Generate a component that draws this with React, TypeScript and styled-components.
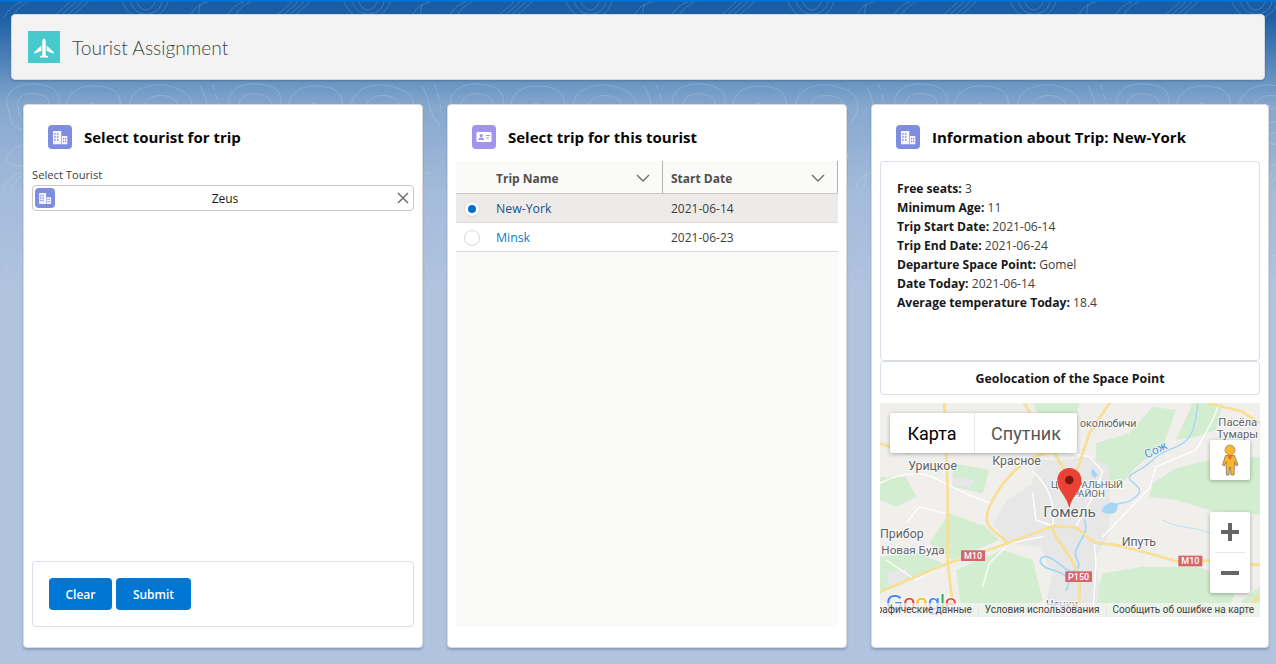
import React from "react";
import styled, { createGlobalStyle } from "styled-components";

const GlobalStyle = createGlobalStyle`
  html, body {
    margin: 0;
    padding: 0;
    height: 100%;
  }
  body {
    font-family: "Open Sans", "Noto Sans", sans-serif;
    font-size: 12px;
    color: #080707;
    overflow: hidden;
  }
`;

const Page = styled.div`
  position: relative;
  width: 1276px;
  height: 664px;
  overflow: hidden;
  background: linear-gradient(180deg, #1a5ca2 0px, #1c5fa4 14px, #6e97c5 84px, #86a8cf 105px, #a4bbda 190px, #b0c3df 290px);
  border-top: 2px solid #0070d2;
  box-sizing: border-box;
`;

const Contours = styled.svg`
  position: absolute;
  inset: 0;
  width: 1276px;
  height: 340px;
  pointer-events: none;
  mask-image: linear-gradient(#000 55%, transparent);
`;

const Content = styled.div`
  position: relative;
  display: flex;
  flex-direction: column;
  padding: 12px 7px 0 11px;
  gap: 24px;
`;

const AppHeader = styled.header`
  display: flex;
  align-items: center;
  gap: 12px;
  height: 66px;
  box-sizing: border-box;
  padding-left: 16px;
  margin-right: 4px;
  background: #f3f3f3;
  border: 1px solid #d4d8de;
  border-radius: 4px;
  box-shadow: 0 1px 2px rgba(40, 60, 90, 0.3);
`;

const AppIcon = styled.div`
  display: flex;
  align-items: center;
  justify-content: center;
  width: 32px;
  height: 32px;
  background: #48c9cb;
`;

const AppTitle = styled.h1`
  margin: 0;
  font-family: Lato, "Open Sans", sans-serif;
  font-size: 19.2px;
  font-weight: 300;
  color: #444;
`;

const Columns = styled.main`
  display: grid;
  grid-template-columns: 400px 400px 398px;
  gap: 24px;
  padding-left: 12px;
`;

const Card = styled.section`
  display: flex;
  flex-direction: column;
  height: 544px;
  box-sizing: border-box;
  padding: 0 8px;
  background: #fff;
  border: 1px solid #dddbda;
  border-radius: 4px;
  box-shadow: 0 2px 2px rgba(60, 80, 110, 0.3);
`;

const CardHeader = styled.div`
  display: flex;
  align-items: center;
  height: 56px;
  flex: none;
  box-sizing: border-box;
  padding: 8px 0 0 16px;
  gap: 12px;
`;

const CardTitle = styled.h2`
  margin: 0;
  font-size: 15px;
  font-weight: 700;
  color: #080707;
`;

const IconTile = styled.span<{ $size: number; $bg: string }>`
  display: inline-flex;
  align-items: center;
  justify-content: center;
  flex: none;
  width: ${(p) => p.$size}px;
  height: ${(p) => p.$size}px;
  border-radius: 4px;
  background: ${(p) => p.$bg};
`;

const FieldLabel = styled.label`
  display: block;
  font-size: 11.2px;
  line-height: 16px;
  margin: 6px 0 2px;
  color: #3e3e3c;
`;

const Lookup = styled.div`
  display: flex;
  align-items: center;
  height: 26px;
  box-sizing: border-box;
  padding: 0 2px;
  border: 1px solid #c9c9c9;
  border-radius: 4px;
`;

const LookupValue = styled.span`
  flex: 1;
  text-align: center;
  font-size: 12px;
  color: #181818;
`;

const ClearIcon = styled.svg`
  flex: none;
  width: 16px;
  height: 16px;
`;

const Spacer = styled.div`
  flex: 1;
`;

const ButtonBox = styled.div`
  display: flex;
  gap: 4px;
  height: 66px;
  box-sizing: border-box;
  padding: 16px;
  margin-bottom: 20px;
  border: 1px solid #d8dde6;
  border-radius: 4px;
`;

const Button = styled.button<{ $width: number }>`
  width: ${(p) => p.$width}px;
  height: 32px;
  padding: 0;
  border: 0;
  border-radius: 4px;
  background: #0176d3;
  color: #fff;
  font-family: inherit;
  font-size: 12px;
  font-weight: 600;
`;

const TableArea = styled.div`
  flex: 1;
  margin-bottom: 20px;
  background: #fafaf9;
  overflow: hidden;
`;

const TableRow = styled.div<{ $bg: string; $height: number; $line: string }>`
  display: grid;
  grid-template-columns: 40px 166px 1fr;
  align-items: center;
  height: ${(p) => p.$height}px;
  box-sizing: border-box;
  background: ${(p) => p.$bg};
  border-bottom: 1px solid ${(p) => p.$line};
`;

const HeaderCell = styled.div`
  display: flex;
  align-items: center;
  justify-content: space-between;
  height: 100%;
  box-sizing: border-box;
  padding: 2px 12px 0 0;
  font-size: 12px;
  font-weight: 700;
  color: #514f4d;
`;

const HeaderCellRight = styled(HeaderCell)`
  padding-left: 8px;
  border-left: 1px solid #b5b3b1;
  border-right: 1px solid #b5b3b1;
`;

const Chevron = styled.svg`
  width: 14px;
  height: 14px;
`;

const RadioCell = styled.div`
  display: flex;
  justify-content: center;
  padding: 2px 9px 0 0;
`;

const Radio = styled.span<{ $checked?: boolean }>`
  display: flex;
  align-items: center;
  justify-content: center;
  width: 16px;
  height: 16px;
  box-sizing: border-box;
  border-radius: 50%;
  background: #fff;
  border: 1px solid #dddbda;

  &::after {
    content: "";
    display: ${(p) => (p.$checked ? "block" : "none")};
    width: 8px;
    height: 8px;
    border-radius: 50%;
    background: #0070d2;
  }
`;

const TripLink = styled.a<{ $active?: boolean }>`
  font-size: 12.3px;
  color: ${(p) => (p.$active ? "#1b4f8a" : "#0b7ad1")};
`;

const DateCell = styled.span`
  padding-left: 9px;
  font-size: 12px;
  color: #3e3e3c;
`;

const InfoBox = styled.div`
  height: 200px;
  flex: none;
  box-sizing: border-box;
  padding: 17px 16px;
  border: 1px solid #d8dde6;
  border-radius: 4px;
`;

const InfoLine = styled.div`
  font-size: 12.1px;
  line-height: 19px;
  color: #3e3e3c;

  b {
    font-weight: 700;
    color: #181818;
  }
`;

const GeoTitle = styled.div`
  display: flex;
  align-items: center;
  justify-content: center;
  flex: none;
  height: 34px;
  box-sizing: border-box;
  border: 1px solid #d8dde6;
  border-radius: 4px;
  font-size: 12.4px;
  font-weight: 700;
  color: #181818;
`;

const MapFrame = styled.div`
  position: relative;
  flex: none;
  height: 214px;
  margin-top: 8px;
  overflow: hidden;
  background: #f0efeb;
`;

const MapDrawing = styled.svg`
  display: block;
  width: 380px;
  height: 214px;
`;

const MapTypes = styled.div`
  position: absolute;
  top: 10px;
  left: 10px;
  display: flex;
  height: 40px;
  background: #fff;
  border-radius: 2px;
  box-shadow: 0 1px 4px rgba(0, 0, 0, 0.3);
`;

const MapType = styled.div<{ $width: number; $active?: boolean }>`
  display: flex;
  align-items: center;
  justify-content: center;
  width: ${(p) => p.$width}px;
  box-sizing: border-box;
  font-family: Roboto, sans-serif;
  font-size: 18px;
  color: ${(p) => (p.$active ? "#000" : "#565656")};
  border-left: ${(p) => (p.$active ? "0" : "1px solid #e6e6e6")};
`;

const Pegman = styled.div`
  position: absolute;
  top: 37px;
  right: 10px;
  display: flex;
  align-items: center;
  justify-content: center;
  width: 40px;
  height: 40px;
  background: #fff;
  border-radius: 2px;
  box-shadow: 0 1px 4px rgba(0, 0, 0, 0.3);
`;

const ZoomControl = styled.div`
  position: absolute;
  top: 109px;
  right: 10px;
  width: 40px;
  height: 81px;
  background: #fff;
  border-radius: 2px;
  box-shadow: 0 1px 4px rgba(0, 0, 0, 0.3);
`;

const ZoomStep = styled.div`
  display: flex;
  align-items: center;
  justify-content: center;
  height: 40px;

  & + & {
    height: 40px;
    margin: 0 5px;
    border-top: 1px solid #e6e6e6;
  }
`;

const Attribution = styled.div`
  position: absolute;
  right: 0;
  bottom: 0;
  display: flex;
  justify-content: flex-end;
  width: 100%;
  height: 14px;
  overflow: hidden;
  background: rgba(245, 245, 245, 0.72);
`;

const AttributionItem = styled.span<{ $first?: boolean }>`
  flex: none;
  padding: 0 6px;
  font-family: Roboto, sans-serif;
  font-size: 10px;
  line-height: 14px;
  color: #444;
  white-space: nowrap;
  border-left: ${(p) => (p.$first ? "0" : "1px solid #e6e6e6")};
`;

const BuildingIcon = ({ size }: { size: number }) => (
  <svg width={size} height={size} viewBox="0 0 24 24">
    <path
      fill="#fff"
      fillOpacity="0.92"
      fillRule="evenodd"
      d="M5 6h8.300v13.300H5zM6.200 8.200v1.600h1.500V8.200zM8.900 8.200v1.600h1.500V8.200zM6.200 11.200v1.600h1.500v-1.600zM8.900 11.200v1.600h1.500v-1.600zM6.200 14.200v1.600h1.500v-1.600zM8.900 14.200v1.600h1.500v-1.600z"
    />
    <path
      fill="#fff"
      fillOpacity="0.92"
      fillRule="evenodd"
      d="M13.900 11H19.300v8.300H13.900zM15 13v1.500h1.200V13zM17 13v1.500h1.200V13zM15 15.700v1.500h1.200v-1.500zM17 15.700v1.500h1.200v-1.500z"
    />
  </svg>
);

const ContactIcon = () => (
  <svg width="24" height="24" viewBox="0 0 24 24">
    <path
      fill="#fff"
      fillRule="evenodd"
      d="M5.500 7h13a1 1 0 0 1 1 1v8a1 1 0 0 1-1 1h-13a1 1 0 0 1-1-1V8a1 1 0 0 1 1-1zM14 10v1h4v-1zM14 12.500v1h3v-1z"
    />
    <circle cx="9.200" cy="10.600" r="1.600" fill="#a094ed" />
    <path fill="#a094ed" d="M6.400 15c0-1.600 1.200-2.400 2.800-2.400s2.800.8 2.800 2.400z" />
  </svg>
);

const PlaneIcon = () => (
  <svg width="32" height="32" viewBox="0 0 32 32">
    <path fill="#fff" d="M16 7.500c1 0 1.700 1.500 1.700 3.200v13.600l2.300 1v1.200h-8v-1.200l2.300-1V10.700c0-1.700.7-3.200 1.700-3.200z" />
    <path fill="#fff" d="M13.400 14.500v5.500l-6.600 2.400c-.8.200-1.100-.5-.6-1.100zM18.600 14.500v5.500l6.600 2.400c.8.200 1.100-.5.6-1.100z" />
  </svg>
);

const DownChevron = () => (
  <Chevron viewBox="0 0 14 14">
    <path d="M1 4l6 6 6-6" fill="none" stroke="#706e6b" strokeWidth="1.400" />
  </Chevron>
);

const ContourLayer = () => (
  <Contours viewBox="0 0 1276 340">
    <defs>
      <pattern id="topo" width="222" height="170" patternUnits="userSpaceOnUse">
        <g fill="none" stroke="#fff" strokeOpacity="0.17">
          {/* top band: nested bends and parallel diagonals */}
          <path d="M4 16C8 8 14 2 22 0M12 16C15 9 20 4 28 0" />
          <path d="M52 16L70 0M58 16L76 0M64 16L82 0M70 16L88 0" />
          <path d="M122 0C128 12 134 16 146 16S164 10 168 0M130 0C134 8 138 12 146 12S160 8 162 0M137 0C139 5 142 8 146 8S153 5 155 0" />
          <path d="M190 16C192 8 198 2 208 0M198 16L200 2" />
          {/* lower band: closed contour rings */}
          <path d="M8 106C2 92 16 80 36 82S62 92 58 106 44 130 26 128 12 118 8 106z" />
          <path d="M18 106C15 97 24 90 36 92S50 98 48 106 38 118 28 117 20 113 18 106z" />
          <path d="M70 120C60 100 72 84 92 84S122 90 120 106 112 128 92 132 76 130 70 120z" />
          <circle cx="92" cy="104" r="3" />
          <path d="M130 100C132 88 150 80 168 84S196 96 190 112 170 134 150 130 128 116 130 100z" />
          <path d="M144 106C144 96 156 92 166 94S180 102 176 110 164 122 154 120 144 114 144 106z" />
          <path d="M154 108l5-5 3 5 5-4 3 7" />
          <path d="M200 84C208 96 206 112 218 124" />
          <path d="M212 82C218 94 218 108 222 114" strokeDasharray="6 4" />
          {/* deeper contours */}
          <path d="M10 150C24 136 60 138 76 150S60 168 36 166 0 162 10 150z" />
          <path d="M110 148C130 136 170 138 180 150S150 168 128 164 98 156 110 148z" />
        </g>
      </pattern>
    </defs>
    <rect width="1276" height="340" fill="url(#topo)" />
  </Contours>
);

const labelProps = {
  fontFamily: "Roboto, sans-serif",
  fill: "#5f6368",
  stroke: "#fff",
  strokeWidth: 6,
  strokeOpacity: 0.8,
  paintOrder: "stroke",
} as const;

const MapLabel = ({ x, y, size = 37, children }: { x: number; y: number; size?: number; children: string }) => (
  <text x={x} y={y} fontSize={size} {...labelProps}>
    {children}
  </text>
);

const Shield = ({ x, y, w, label }: { x: number; y: number; w: number; label: string }) => (
  <g>
    <rect x={x} y={y} width={w} height={32} fill="#d6646b" />
    <text x={x + w / 2} y={y + 25} textAnchor="middle" fontFamily="Roboto, sans-serif" fontWeight="500" fontSize="27" fill="#fff">
      {label}
    </text>
  </g>
);

const mainRoads = [
  "M12 575L215 490 390 432 530 378 600 382 655 428 720 435 800 455 905 485 1000 482 1152 495",
  "M445 10L530 150 565 210",
  "M700 10L640 100 600 220",
  "M205 10L215 280 215 490 235 651",
  "M530 155C440 170 385 230 345 310S370 390 395 432",
  "M530 378C530 420 590 460 605 520S605 610 600 651",
  "M12 130L100 160",
  "M1000 10L1100 35 1152 70",
  "M1090 651L1152 585",
];

const CityMap = () => (
  <MapDrawing viewBox="12 9 1140 642">
    <rect x="12" y="9" width="1140" height="642" fill="#f0efeb" />
    {/* forests */}
    <g fill="#d2edcf">
      <path d="M830 250L900 205 1000 180 1152 170V345L1000 330 900 300 820 290z" />
      <path d="M950 10H1040L1020 90 960 110 900 120z" />
      <path d="M680 520L800 500 960 500 1090 540 1050 651H640z" />
      <path d="M1100 600L1152 560V651H1080z" />
      <path d="M220 340L330 380 370 420 230 480 160 430z" />
      <path d="M12 470L130 460 200 490 60 560 12 580z" />
      <path d="M240 510L380 450 470 480 500 600 430 651H260z" />
      <path d="M12 230H90L120 290 60 320 12 300z" />
      <path d="M230 190L340 210 320 280 230 260z" />
      <path d="M660 130L760 100 830 20 900 30 860 140 780 200 720 270 660 230z" />
      <path d="M470 10H610L600 60 530 130z" />
    </g>
    {/* city */}
    <path
      fill="#e7e7e7"
      d="M395 300L470 250 480 180 560 180 640 170 700 200 700 290 700 400 660 470 670 600 620 651H500L530 520 490 440 400 430 350 370z"
    />
    <path fill="#e7e7e7" d="M230 230L300 240 280 265 235 255zM30 520L90 505 100 540 40 560z" />
    {/* water */}
    <g fill="none" stroke="#a6d6f6" strokeLinecap="round" strokeLinejoin="round">
      <path strokeWidth="4" d="M965 12C960 70 950 110 920 130S860 150 830 180 770 215 760 230 815 260 780 290 730 300 715 320" />
      <path strokeWidth="5" d="M625 360C640 400 610 420 600 450S625 490 600 510 540 470 510 470 490 500 530 510 590 540 570 570" />
      <path strokeWidth="2" d="M860 360C900 385 960 380 1000 400S1090 410 1120 400" />
    </g>
    <path fill="#a6d6f6" d="M680 325C690 305 725 300 725 320S705 345 690 340 675 335 680 325zM650 205L665 225 655 235 645 220z" />
    {/* minor roads */}
    <g fill="none" stroke="#fff" strokeWidth="4" strokeLinecap="round">
      <path d="M12 250C60 225 110 215 150 225S250 280 345 310" />
      <path d="M530 150L640 170 680 215 650 290 600 380" />
      <path d="M470 215C500 240 540 290 530 378" />
      <path d="M470 280L480 360 530 378" />
      <path d="M655 428L660 490 650 651" />
      <path d="M680 410L820 265 840 200 960 150 1010 60 1030 10" />
      <path d="M215 490L120 540 30 480" />
      <path d="M90 370L130 320 205 340" />
      <path d="M400 430L340 490 320 560" />
      <path d="M400 430L500 410" />
    </g>
    {/* main roads */}
    <g fill="none" strokeLinejoin="round" strokeLinecap="round">
      <g stroke="#f3d583" strokeWidth="7">
        {mainRoads.map((d) => (
          <path key={d} d={d} />
        ))}
      </g>
      <g stroke="#fde293" strokeWidth="4.500">
        {mainRoads.map((d) => (
          <path key={d} d={d} />
        ))}
      </g>
    </g>
    <Shield x={255} y={451} w={72} label="M10" />
    <Shield x={907} y={467} w={72} label="M10" />
    <Shield x={568} y={514} w={80} label="P150" />
    {/* place names */}
    <MapLabel x={612} y={80} size={32}>околюбичи</MapLabel>
    <MapLabel x={1027} y={77} size={34}>Пасёла</MapLabel>
    <MapLabel x={1022} y={113} size={34}>Тумары</MapLabel>
    <MapLabel x={97} y={210}>Урицкое</MapLabel>
    <MapLabel x={349} y={195}>Красное</MapLabel>
    <MapLabel x={525} y={264} size={29}>ЦЕНТРАЛЬНЫЙ</MapLabel>
    <MapLabel x={590} y={292} size={29}>РАЙОН</MapLabel>
    <MapLabel x={502} y={350} size={46}>Гомель</MapLabel>
    <MapLabel x={12} y={414}>Прибор</MapLabel>
    <MapLabel x={16} y={462} size={35}>Новая Буда</MapLabel>
    <MapLabel x={737} y={437}>Ипуть</MapLabel>
    <MapLabel x={510} y={625} size={33}>Ченки</MapLabel>
    <text
      x="812"
      y="176"
      fontSize="36"
      fontFamily="Roboto, sans-serif"
      fill="#4a90d9"
      stroke="#fff"
      strokeWidth="4"
      strokeOpacity="0.7"
      paintOrder="stroke"
      transform="rotate(-26 812 176)"
    >
      Сож
    </text>
    {/* google logo */}
    <text x="30" y="630" fontFamily="'Liberation Sans', sans-serif" fontSize="66" fontWeight="400" stroke="#fff" strokeWidth="4" paintOrder="stroke">
      <tspan fill="#4285f4">G</tspan>
      <tspan fill="#ea4335">o</tspan>
      <tspan fill="#fbbc05">o</tspan>
      <tspan fill="#4285f4">g</tspan>
      <tspan fill="#34a853">l</tspan>
      <tspan fill="#ea4335">e</tspan>
    </text>
    {/* pin */}
    <path fill="#ea4335" d="M580 325C572 285 544 275 544 240a36 36 0 0 1 72 0C616 275 588 285 580 325z" />
    <circle cx="580" cy="240" r="13" fill="#7f1610" />
  </MapDrawing>
);

const details: [string, string][] = [
  ["Free seats:", "3"],
  ["Minimum Age:", "11"],
  ["Trip Start Date:", "2021-06-14"],
  ["Trip End Date:", "2021-06-24"],
  ["Departure Space Point:", "Gomel"],
  ["Date Today:", "2021-06-14"],
  ["Average temperature Today:", "18.4"],
];

export default function App() {
  return (
    <Page>
      <GlobalStyle />
      <ContourLayer />
      <Content>
        <AppHeader>
          <AppIcon>
            <PlaneIcon />
          </AppIcon>
          <AppTitle>Tourist Assignment</AppTitle>
        </AppHeader>
        <Columns>
          <Card>
            <CardHeader>
              <IconTile $size={24} $bg="#7f8de1">
                <BuildingIcon size={24} />
              </IconTile>
              <CardTitle>Select tourist for trip</CardTitle>
            </CardHeader>
            <FieldLabel>Select Tourist</FieldLabel>
            <Lookup>
              <IconTile $size={20} $bg="#7f8de1">
                <BuildingIcon size={20} />
              </IconTile>
              <LookupValue>Zeus</LookupValue>
              <ClearIcon viewBox="0 0 16 16">
                <path d="M3 3l10 10M13 3L3 13" stroke="#706e6b" strokeWidth="1.500" fill="none" />
              </ClearIcon>
            </Lookup>
            <Spacer />
            <ButtonBox>
              <Button $width={63}>Clear</Button>
              <Button $width={75}>Submit</Button>
            </ButtonBox>
          </Card>

          <Card>
            <CardHeader>
              <IconTile $size={24} $bg="#a094ed">
                <ContactIcon />
              </IconTile>
              <CardTitle>Select trip for this tourist</CardTitle>
            </CardHeader>
            <TableArea>
              <TableRow $bg="#fafaf9" $height={33} $line="#c9c7c5">
                <span />
                <HeaderCell>
                  Trip Name
                  <DownChevron />
                </HeaderCell>
                <HeaderCellRight>
                  Start Date
                  <DownChevron />
                </HeaderCellRight>
              </TableRow>
              <TableRow $bg="#ecebea" $height={29} $line="#dddbda">
                <RadioCell>
                  <Radio $checked />
                </RadioCell>
                <TripLink $active>New-York</TripLink>
                <DateCell>2021-06-14</DateCell>
              </TableRow>
              <TableRow $bg="#fff" $height={29} $line="#dddbda">
                <RadioCell>
                  <Radio />
                </RadioCell>
                <TripLink>Minsk</TripLink>
                <DateCell>2021-06-23</DateCell>
              </TableRow>
            </TableArea>
          </Card>

          <Card>
            <CardHeader>
              <IconTile $size={24} $bg="#7f8de1">
                <BuildingIcon size={24} />
              </IconTile>
              <CardTitle>Information about Trip: New-York</CardTitle>
            </CardHeader>
            <InfoBox>
              {details.map(([label, value]) => (
                <InfoLine key={label}>
                  <b>{label}</b> {value}
                </InfoLine>
              ))}
            </InfoBox>
            <GeoTitle>Geolocation of the Space Point</GeoTitle>
            <MapFrame>
              <CityMap />
              <MapTypes>
                <MapType $width={84} $active>
                  Карта
                </MapType>
                <MapType $width={103}>Спутник</MapType>
              </MapTypes>
              <Pegman>
                <svg width="18" height="32" viewBox="0 0 18 32">
                  <circle cx="9" cy="6" r="5" fill="#fbb62e" stroke="#8f8471" strokeWidth="0.700" />
                  <path
                    fill="#fbb62e"
                    stroke="#7d7466"
                    strokeWidth="0.800"
                    d="M4.500 11.500h9l3.500 9.500-1.900.8-1.600-4.300-.5 13.500h-2.900L9.400 23h-.8l-.6 8H5.500L5 17.500l-1.600 4.300-1.900-.8z"
                  />
                  <path fill="#e8762b" d="M6 11.500l3 5 3-5z" />
                </svg>
              </Pegman>
              <ZoomControl>
                <ZoomStep>
                  <svg width="18" height="18" viewBox="0 0 18 18">
                    <path d="M7 0h4v7h7v4h-7v7H7v-7H0V7h7z" fill="#666" />
                  </svg>
                </ZoomStep>
                <ZoomStep>
                  <svg width="18" height="18" viewBox="0 0 18 18">
                    <path d="M0 7h18v4H0z" fill="#666" />
                  </svg>
                </ZoomStep>
              </ZoomControl>
              <Attribution>
                <AttributionItem $first>Картографические данные</AttributionItem>
                <AttributionItem>Условия использования</AttributionItem>
                <AttributionItem>Сообщить об ошибке на карте</AttributionItem>
              </Attribution>
            </MapFrame>
          </Card>
        </Columns>
      </Content>
    </Page>
  );
}
